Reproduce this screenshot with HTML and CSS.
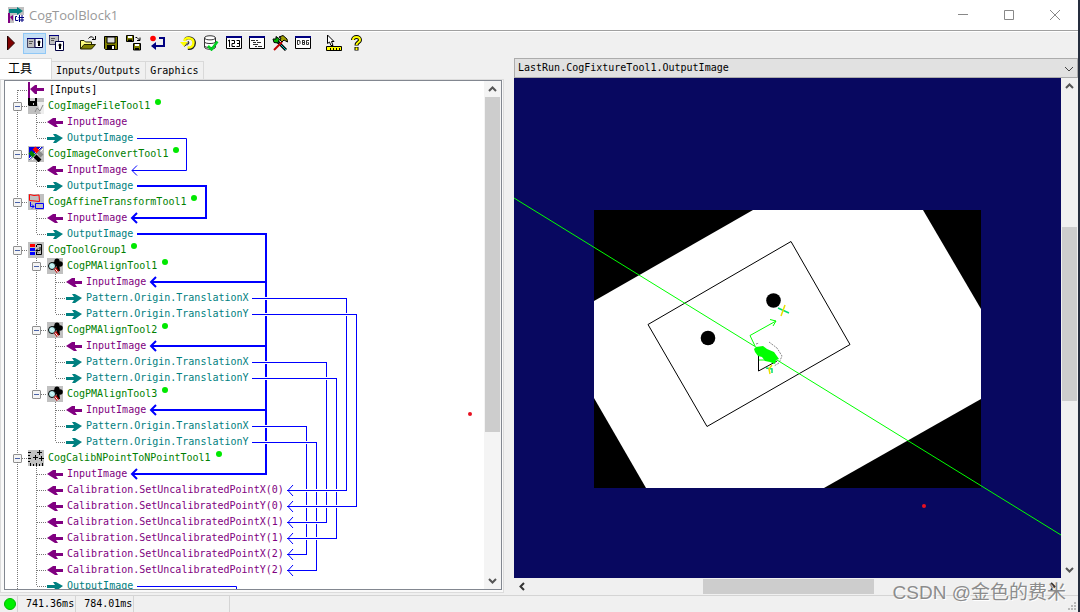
FILE: index.html
```html
<!DOCTYPE html>
<html lang="zh-CN">
<head>
<meta charset="utf-8">
<title>CogToolBlock1</title>
<link rel="stylesheet" href="styles.css">
</head>
<body>
<svg class="defs" aria-hidden="true">
  <symbol id="in" viewBox="0 0 16 16"><path fill="#800080" d="M0 8 6 4H9V7H16V10H9L11 13H8Z"/></symbol>
  <symbol id="out" viewBox="0 0 16 16"><path fill="#008080" d="M16 8 9 4H6L8 7H0V10H8L6 13H9Z"/></symbol>
  <symbol id="pm" viewBox="0 0 16 16"><path fill="#c0c0c0" d="M0 0H16V16H0Z"/><circle cx="10" cy="3" r="2.600"/><circle cx="13" cy="6" r="2.800"/><circle cx="8" cy="6" r="2.500"/><path d="M9 4h3l1 9h-3z"/><circle cx="5" cy="8" r="3.500" fill="#b8eef0" stroke="#000"/><path stroke="#fff" d="M4 6.500 6 8.500"/><path stroke="#b00000" stroke-width="3" d="m8 10 3 4"/><path stroke="#fff" d="m8 10.500 3 4"/></symbol>
  <symbol id="up" viewBox="0 0 15 15"><path fill="none" stroke="#555" stroke-width="2" d="m4 9 3.500-3.500L11 9"/></symbol>
  <symbol id="down" viewBox="0 0 15 15"><path fill="none" stroke="#555" stroke-width="2" d="m4 6 3.500 3.500L11 6"/></symbol>
  <symbol id="left" viewBox="0 0 15 15"><path fill="none" stroke="#333" stroke-width="2" d="M9 4 5.500 7.500 9 11"/></symbol>
  <symbol id="right" viewBox="0 0 15 15"><path fill="none" stroke="#333" stroke-width="2" d="m6 4 3.500 3.500L6 11"/></symbol>
</svg>
<div class="window">
<header class="titlebar">
  <svg class="i16" viewBox="0 0 16 16"><path fill="#c0c0c0" d="M0 0H16V16H0Z"/><path fill="#fff" d="M6 8H16V16H6Z"/><path fill="#800080" d="M0 6H2V16H0ZM2 10 5 8V14Z"/><path fill="#008080" d="M1 2H9V0L15 4 9 8V6H1Z"/><path fill="none" stroke="#000080" d="M9 9.500H7.500V13.500H10M11.500 8V15M14 8V15M10.500 10.500H16M10.500 13H16"/></svg>
  <h1 class="title">CogToolBlock1</h1>
  <div class="winbtns">
    <button aria-label="Minimize"><svg class="i12" viewBox="0 0 12 12"><path d="M1 5.500H11"/></svg></button>
    <button aria-label="Maximize"><svg class="i12" viewBox="0 0 12 12"><path d="M1.500 1.500H10.500V10.500H1.500Z"/></svg></button>
    <button aria-label="Close"><svg class="i12" viewBox="0 0 12 12"><path d="M1 1 11 11M11 1 1 11"/></svg></button>
  </div>
</header>
<nav class="toolbar" aria-label="Toolbar">
  <button class="tool" aria-label="Run"><svg class="i16" viewBox="0 0 16 16"><path fill="#800000" stroke="#200" d="M4.500 1 11.500 8 4.500 15Z"/></svg></button>
  <button class="tool on" aria-label="Docked display"><svg class="i16" viewBox="0 0 16 16"><path fill="#c0c0c0" stroke="#446" d="M.5 3.500H8V12.500H.5Z"/><path fill="#fff" stroke="#000040" d="M8 3.500H15.500V12.500H8Z"/><path stroke="#000080" d="M0 3.500H16"/><path stroke="#555" d="M2 6.500H6M2 8.500H5"/><circle cx="12" cy="7" r="1.500"/><path stroke="#000" stroke-width="2" d="M12 8V11"/></svg></button>
  <button class="tool" aria-label="Floating display"><svg class="i16" viewBox="0 0 16 16"><path fill="#c0c0c0" stroke="#446" d="M.5.5H9.500V9.500H.5Z"/><path stroke="#000080" d="M0 .5H10"/><path stroke="#555" d="M2 3.500H6M2 5.500H5"/><path fill="#fff" stroke="#000040" d="M6.500 6.500H14.500V15.500H6.500Z"/><circle cx="11" cy="10" r="1.500"/><path stroke="#000" stroke-width="2" d="M11 11V14"/></svg></button>
  <span class="sep"></span>
  <button class="tool" aria-label="Open"><svg class="i16" viewBox="0 0 16 16"><path fill="#ffff80" stroke="#220" d="M.5 14V5.500H4L5.500 7H11.500V9"/><path fill="#808000" stroke="#220" d="M.5 14 4 9.500H15.500L11.500 14Z"/><path fill="none" stroke="#000" d="M8.500 3.500Q11 0 14 3.500M15.500 1V4.500H12"/></svg></button>
  <button class="tool" aria-label="Save"><svg class="i16" viewBox="0 0 16 16"><path fill="#808000" stroke="#000" d="M1.500 1.500H14.500V14.500H2.500L1.500 13.500Z"/><path fill="#ddd" stroke="#000" d="M4 2H12V8H4Z"/><path d="M4 10H12V15H4Z"/><path fill="#fff" d="M9 11H11V14H9Z"/></svg></button>
  <button class="tool" aria-label="Save all"><svg class="i16" viewBox="0 0 16 16"><path fill="#808000" stroke="#000" d="M.5.5H7.500V6.500H.5ZM7.500 8.500H14.500V15H7.500Z"/><path fill="#fff" d="M2 1H6V3H2ZM9 9H13V11H9Z"/><path d="M2 4.500H6V6.500H2ZM9 13H13V15H9Z"/><path fill="none" stroke="#000" d="M9.500 2.500H11L13.500 5M14 2.500V5.500H11"/></svg></button>
  <button class="tool" aria-label="Reset"><svg class="i16" viewBox="0 0 16 16"><circle cx="4" cy="3.500" r="2.800" fill="red"/><path fill="none" stroke="#000080" stroke-width="2" d="M10 3H15V11H6"/><path fill="#000080" d="M2 11 7 7V15Z"/></svg></button>
  <span class="sep"></span>
  <button class="tool" aria-label="Refresh"><svg class="i16" viewBox="0 0 16 16"><path fill="none" stroke="#222" stroke-width="3" d="M5 4.500C8 1 14.500 3 14.500 8C14.500 12 11 14 8 13.500"/><path fill="none" stroke="#ff0" stroke-width="2.500" d="M4 6C6 1.500 13.500 2.500 13.500 7.500C13.500 11.500 10.500 13 7.500 12.500"/><path fill="#ff0" d="M0 7H8L4 11.500Z"/><path fill="none" stroke="#222" d="M8 7.500 4.500 11.500M7 10.500 9 8 8 6"/></svg></button>
  <button class="tool" aria-label="Database"><svg class="i16" viewBox="0 0 16 16"><path fill="#fff" stroke="#333" d="M1.500 3C1.500 0 12.500 0 12.500 3V12C12.500 15 1.500 15 1.500 12Z"/><path fill="none" stroke="#333" d="M1.500 3C2 5.500 12 5.500 12.500 3M1.500 7C2 9 12 9 12.500 7M1.500 11C2 13 12 13 12.500 11"/><path fill="none" stroke="#00d020" stroke-width="2.500" d="M5 11 8.500 14.500 14.500 6.500"/></svg></button>
  <button class="tool" aria-label="Numeric"><svg class="i16" viewBox="0 0 16 16"><path fill="#fff" stroke="#000" d="M.5 1.500H15.500V13.500H.5Z"/><path stroke="#000080" stroke-width="2" d="M0 2H16"/><path fill="none" stroke="#000" d="M2 6 3.500 5V12M5.500 5.500H8.500V8.500H6V11.500H9M10.500 5.500H13.500V11.500H10.500M11 8.500H13.500"/></svg></button>
  <button class="tool" aria-label="Script"><svg class="i16" viewBox="0 0 16 16"><path fill="#fff" stroke="#000" d="M.5 1.500H15.500V13.500H.5Z"/><path stroke="#000080" stroke-width="2" d="M0 2H16"/><path stroke="#333" d="M2 5.500H6M7 5.500H9M4 7.500H7M8 7.500H12M4 9.500H9M6 11.500H8M9 11.500H13"/></svg></button>
  <button class="tool" aria-label="Tools"><svg class="i16" viewBox="0 0 16 16"><path stroke="#000" stroke-width="3" d="M5 6 14 15"/><path stroke="#0cc" d="M5 6 14 15"/><path stroke="#c00000" stroke-width="2" d="M10 7 2 15"/><path fill="#00b000" stroke="#000" d="M4 1.500V4L1 4 2 7.500 6 8 7.500 4Z"/><path fill="#a0a000" stroke="#000" d="M7 2 11 .5 15 4 15.500 7 12 5 10 7 8 5 9 3Z"/></svg></button>
  <button class="tool" aria-label="Debug"><svg class="i16" viewBox="0 0 16 16"><path fill="#fff" stroke="#000" d="M.5 1.500H15.500V13.500H.5Z"/><path stroke="#000080" stroke-width="2" d="M0 2H16"/><path fill="none" stroke="#333" d="M2.500 5V9.500H4L5 8.500V6L4 5.500H2M7.500 5V9.500H9.500V5.500H7M7 7.500H9.500M14 5.500H11.500V9.500H13.500V7.500H12.500"/></svg></button>
  <span class="sep"></span>
  <button class="tool" aria-label="Pointer ruler"><svg class="i16" viewBox="0 0 16 16"><path fill="#fff" stroke="#000" d="M1.500 0V8.500L3.500 7 5 10.500H7L5.500 6.500H8Z"/><path fill="#ff0" stroke="#000" d="M.5 11.500H15.500V15.500H.5Z"/><path stroke="#000" d="M4.500 13V15M7.500 13V15M10.500 13V15M13.500 13V15"/></svg></button>
  <button class="tool" aria-label="Help"><svg class="i16" viewBox="0 0 16 16"><path fill="none" stroke="#000" stroke-width="4" d="M4 5C4 1 11 1 11 5 11 7.500 7.500 7 7.500 10.500M7.500 12V15.500"/><path fill="none" stroke="#ff0" stroke-width="2" d="M4 5C4 1 11 1 11 5 11 7.500 7.500 7 7.500 10M7.500 12.500V15"/></svg></button>
</nav>
<main class="main">
  <section class="left">
    <div class="tabs" role="tablist">
      <button class="tab active" role="tab" aria-selected="true">工具</button>
      <button class="tab" role="tab">Inputs/Outputs</button>
      <button class="tab" role="tab">Graphics</button>
    </div>
    <div class="page"><div class="treebox">
      <div class="tree">
        <div class="row leaf0 inputs"><svg class="i16" viewBox="0 0 16 16"><path fill="#800080" d="M0 0H2V16H0ZM2 7 7 3H9V6H16V9H9V12H7Z"/></svg>[Inputs]</div>
        <div class="row node0"><button class="box" aria-label="Collapse"></button><svg class="i16" viewBox="0 0 16 16"><path fill="#c0c0c0" d="M0 0H16V16H0Z"/><path fill="#eee" d="M9 4H16V16H13Z"/><path d="M0 0H9V8H1L0 7Z"/><path fill="#ccc" d="M2 0H7V3H2ZM5 5H6V7H5Z"/><path fill="none" stroke="#888" d="M7 14 9 10 12 13 15 7"/></svg><span class="name">CogImageFileTool1</span><i class="dot"></i></div>
        <div class="row leaf1 in"><svg class="i16"><use href="#in"/></svg>InputImage</div>
        <div class="row leaf1 out"><svg class="i16"><use href="#out"/></svg>OutputImage</div>
        <div class="row node0"><button class="box" aria-label="Collapse"></button><svg class="i16" viewBox="0 0 16 16"><path fill="#c0c0c0" d="M0 0H16V16H0Z"/><path fill="#0000e0" d="M1 1H15L1 14Z"/><path stroke="#fff" d="M13 1 1 13M15 3 4 14"/><path stroke="red" stroke-width="4" d="m6 2 4 4"/><path stroke="#008000" stroke-width="4" d="m2 6 4 4"/><path stroke="#000" stroke-width="4" d="m7 10 5 5"/><path stroke="#888" stroke-width="4" d="m10 6 4 4"/></svg><span class="name">CogImageConvertTool1</span><i class="dot"></i></div>
        <div class="row leaf1 in"><svg class="i16"><use href="#in"/></svg>InputImage</div>
        <div class="row leaf1 out"><svg class="i16"><use href="#out"/></svg>OutputImage</div>
        <div class="row node0"><button class="box" aria-label="Collapse"></button><svg class="i16" viewBox="0 0 16 16"><path fill="#c0c0c0" d="M0 0H16V16H0Z"/><path fill="none" stroke="red" d="M1.500.5 6 1.500 11 1 11.500 7.500 1.500 6.500Z"/><path fill="none" stroke="#00f" d="M7.500 9.500H15.500V14.500H7.500ZM2.500 8V12.500H6M4 10.500 6 12.500 4 14.500"/></svg><span class="name">CogAffineTransformTool1</span><i class="dot"></i></div>
        <div class="row leaf1 in"><svg class="i16"><use href="#in"/></svg>InputImage</div>
        <div class="row leaf1 out"><svg class="i16"><use href="#out"/></svg>OutputImage</div>
        <div class="row node0"><button class="box" aria-label="Collapse"></button><svg class="i16" viewBox="0 0 16 16"><path fill="#c0c0c0" d="M0 0H16V16H0Z"/><path fill="red" d="M2 2H7V5H2Z"/><path fill="#00f" d="M2 6H7V9H2ZM2 10H7V13H2Z"/><path fill="none" stroke="#000" d="M9 2.500H13.500V12.500H8M12 5V8.500H8M10 6.500 8 8.500 10 10.500M8.500 3V5M8.500 10V13"/></svg><span class="name">CogToolGroup1</span><i class="dot"></i></div>
        <div class="row node1"><button class="box" aria-label="Collapse"></button><svg class="i16"><use href="#pm"/></svg><span class="name">CogPMAlignTool1</span><i class="dot"></i></div>
        <div class="row leaf2 in"><svg class="i16"><use href="#in"/></svg>InputImage</div>
        <div class="row leaf2 out"><svg class="i16"><use href="#out"/></svg>Pattern.Origin.TranslationX</div>
        <div class="row leaf2 out"><svg class="i16"><use href="#out"/></svg>Pattern.Origin.TranslationY</div>
        <div class="row node1"><button class="box" aria-label="Collapse"></button><svg class="i16"><use href="#pm"/></svg><span class="name">CogPMAlignTool2</span><i class="dot"></i></div>
        <div class="row leaf2 in"><svg class="i16"><use href="#in"/></svg>InputImage</div>
        <div class="row leaf2 out"><svg class="i16"><use href="#out"/></svg>Pattern.Origin.TranslationX</div>
        <div class="row leaf2 out"><svg class="i16"><use href="#out"/></svg>Pattern.Origin.TranslationY</div>
        <div class="row node1"><button class="box" aria-label="Collapse"></button><svg class="i16"><use href="#pm"/></svg><span class="name">CogPMAlignTool3</span><i class="dot"></i></div>
        <div class="row leaf2 in"><svg class="i16"><use href="#in"/></svg>InputImage</div>
        <div class="row leaf2 out"><svg class="i16"><use href="#out"/></svg>Pattern.Origin.TranslationX</div>
        <div class="row leaf2 out"><svg class="i16"><use href="#out"/></svg>Pattern.Origin.TranslationY</div>
        <div class="row node0"><button class="box" aria-label="Collapse"></button><svg class="i16" viewBox="0 0 16 16"><path fill="#c0c0c0" d="M0 0H16V16H0Z"/><path stroke="#000" d="M0 2.500H3M0 5.500H2M0 8.500H3M0 11.500H2M2.500 13V16M5.500 14V16M8.500 13V16M11.500 14V16M14.500 13V16M9 2.500H14M11.500 0V5M5 7.500H10M7.500 5V10M11 8.500H16M13.500 6V11"/></svg><span class="name">CogCalibNPointToNPointTool1</span><i class="dot"></i></div>
        <div class="row leaf1 in"><svg class="i16"><use href="#in"/></svg>InputImage</div>
        <div class="row leaf1 in"><svg class="i16"><use href="#in"/></svg>Calibration.SetUncalibratedPointX(0)</div>
        <div class="row leaf1 in"><svg class="i16"><use href="#in"/></svg>Calibration.SetUncalibratedPointY(0)</div>
        <div class="row leaf1 in"><svg class="i16"><use href="#in"/></svg>Calibration.SetUncalibratedPointX(1)</div>
        <div class="row leaf1 in"><svg class="i16"><use href="#in"/></svg>Calibration.SetUncalibratedPointY(1)</div>
        <div class="row leaf1 in"><svg class="i16"><use href="#in"/></svg>Calibration.SetUncalibratedPointX(2)</div>
        <div class="row leaf1 in"><svg class="i16"><use href="#in"/></svg>Calibration.SetUncalibratedPointY(2)</div>
        <div class="row leaf1 out"><svg class="i16"><use href="#out"/></svg>OutputImage</div>
        <svg class="wires" viewBox="5 82 480 512" aria-hidden="true">
          <g class="guide"><path d="M17.500 90V102M17.500 110V150M17.500 158V198M17.500 206V246M17.500 254V454M17.500 462V594"/><path d="M36.500 114V138M36.500 162V186M36.500 210V234M36.500 258V262M36.500 270V326M36.500 334V390M36.500 466V586"/><path d="M55.500 274V314M55.500 338V378M55.500 402V442"/>
          <path d="M18 90.500H28M22 106.500H28M22 154.500H28M22 202.500H28M22 250.500H28M22 458.500H28M41 266.500H47M41 330.500H47M41 394.500H47"/>
          <path d="M37 122.500H47M37 138.500H47M37 170.500H47M37 186.500H47M37 218.500H47M37 234.500H47M37 474.500H47M37 490.500H47M37 506.500H47M37 522.500H47M37 538.500H47M37 554.500H47M37 570.500H47M37 586.500H47"/>
          <path d="M56 282.500H66M56 298.500H66M56 314.500H66M56 346.500H66M56 362.500H66M56 378.500H66M56 410.500H66M56 426.500H66M56 442.500H66"/></g>
          <g class="thick"><path d="M137 186H206V218H132M137 234H266V474H132M266 282H151M266 346H151M266 410H151"/><path d="m137 213-5 5 5 5M137 469l-5 5 5 5M156 277l-5 5 5 5M156 341l-5 5 5 5M156 405l-5 5 5 5"/></g>
          <g class="thin"><path d="M137 138.500H186.500V170.500H132M137 586.500H236.500V594M346.500 298V491M356.500 314V507M326.500 362V523M336.500 378V539M306.500 426V555M316.500 442V571"/></g>
          <path class="gap" d="M255 298.500H300M255 314.500H353M255 362.500H300M255 378.500H333M255 426.500H300M255 442.500H313M290 490.500H343M290 506.500H353M290 522.500H323M290 538.500H333M290 554.500H303M290 570.500H313"/>
          <g class="thin"><path d="M252 298.500H347M252 314.500H357M252 362.500H327M252 378.500H337M252 426.500H307M252 442.500H317M287 490.500H347M287 506.500H357M287 522.500H327M287 538.500H337M287 554.500H307M287 570.500H317"/><path d="m137 165.500-5 5 5 5M293 485l-5 5.500 5 5.500M293 501l-5 5.500 5 5.500M293 517l-5 5.500 5 5.500M293 533l-5 5.500 5 5.500M293 549l-5 5.500 5 5.500M293 565l-5 5.500 5 5.500"/></g>
          <circle cx="470" cy="414" r="2" fill="#e81020"/>
        </svg>
      </div>
      <div class="vbar"><button aria-label="Scroll up"><svg class="i15"><use href="#up"/></svg></button><div class="track tree-track"><div class="thumb"></div></div><button aria-label="Scroll down"><svg class="i15"><use href="#down"/></svg></button></div>
    </div></div>
  </section>
  <section class="right">
    <div class="combo"><select class="select" aria-label="Image record"><option>LastRun.CogFixtureTool1.OutputImage</option></select><svg class="chev" viewBox="0 0 10 6"><path d="m1 1 4 4 4-4"/></svg></div>
    <div class="view">
      <svg class="canvas" viewBox="514 78 547 500" role="img" aria-label="Output image">
        <path d="M594 210H981V488H594Z"/>
        <path fill="#fff" d="M753 210H923L981 309V399L824 488H646L594 398V301Z"/>
        <path fill="none" stroke="#000" d="M791 241.500 850 344.500 707 426.500 648 324.500ZM758.500 352V371L777 361"/>
        <circle cx="773.500" cy="300.500" r="7.300"/><circle cx="708" cy="338" r="7.300"/>
        <path fill="none" stroke="#888" stroke-dasharray="2 1" d="M756 344 759 343M769 342 777 348 782 356 779 363 774 366"/>
        <path stroke="#0f0" fill="none" d="M514 198 1061 535M755 346 750 335.500 776 321M770 319.500 776 321 773 326M759 360H766L770 356"/>
        <path fill="#0f0" d="m756 347 7-1 4 3 7 3 5 7-3 1-1 4-5-2-5-1-3-4-4-1-3-4-1-3z"/>
        <path stroke="#00e070" stroke-width="1.500" fill="none" d="m778 308 11 5M766 368l6 1v4"/><path stroke="#e8e000" stroke-width="1.500" fill="none" d="m781 316 4-11M770 374l-1-5 3-4"/>
        <circle cx="924" cy="506" r="2" fill="#e81020"/>
      </svg>
      <div class="vbar"><button aria-label="Scroll up"><svg class="i15"><use href="#up"/></svg></button><div class="track view-track"><div class="thumb"></div></div><button aria-label="Scroll down"><svg class="i15"><use href="#down"/></svg></button></div>
    </div>
    <div class="hbar"><button aria-label="Scroll left"><svg class="i15"><use href="#left"/></svg></button><div class="track h-track"><div class="thumb"></div></div><button aria-label="Scroll right"><svg class="i15"><use href="#right"/></svg></button></div>
  </section>
</main>
<footer class="status">
  <span class="cell lamp"><i class="light"></i></span><span class="cell">741.36ms</span><span class="cell">784.01ms</span><span class="cell spare"></span>
  <svg class="grip" viewBox="0 0 9 9"><path fill="#b8b8b8" d="M6 0h2v2H6zM3 3h2v2H3zM6 3h2v2H6zM0 6h2v2H0zM3 6h2v2H3zM6 6h2v2H6z"/></svg>
</footer>
<div class="watermark">CSDN @金色的费米</div>
</div>
</body>
</html>
```
FILE: styles.css
```css
* { box-sizing: border-box; }
body {
  margin: 0;
  font: 10px/16px "DejaVu Sans Mono", "Noto Sans CJK SC", monospace;
  color: #000;
  background: #252d3d;
}
button { margin: 0; padding: 0; border: 0; background: none; font: inherit; color: inherit; }
svg { display: block; flex: none; }
.defs { position: absolute; width: 0; height: 0; }
.i16 { width: 16px; height: 16px; }
.i15 { width: 15px; height: 15px; }
.i12 { width: 12px; height: 12px; fill: none; stroke: #888; }
.window {
  position: relative;
  display: flex;
  flex-direction: column;
  height: 100vh;
  margin-right: 2px;
  background: #f0f0f0;
}

.titlebar {
  display: flex;
  align-items: center;
  gap: 5px;
  height: 31px;
  padding-left: 8px;
  background: #fff;
  border-bottom: 1px solid #a0a0a0;
}
.title { margin: 0; font: 13px/20px "Open Sans", "Noto Sans", sans-serif; color: #999; }
.winbtns { display: flex; margin-left: auto; }
.winbtns button { display: grid; place-items: center; width: 46px; height: 30px; }

.toolbar { display: flex; height: 27px; padding-top: 1px; border-top: 1px solid #fff; }
.tool { width: 23px; height: 21px; padding: 1px 4px 3px 3px; }
.tool.on { padding: 1px 2px 2px 3px; background: #c5dff5; border: 1px solid #90c8f6; }
.sep { width: 8px; }

.main { flex: 1; min-height: 0; display: grid; grid-template-columns: 504fr 564fr; column-gap: 10px; }
.left, .right { display: flex; flex-direction: column; min-width: 0; min-height: 0; }
.tabs { display: flex; align-items: flex-end; height: 21px; }
.tab { height: 18px; padding: 0 5px 0 4px; border: 1px solid #d9d9d9; border-width: 1px 1px 0 0; white-space: nowrap; }
.tab.active { width: 52px; height: 21px; padding: 0 0 0 8px; text-align: left; font-size: 12px; background: #fff; }
.page { flex: 1; min-height: 0; margin-bottom: 2px; padding: 0 1px 2px 3px; border: 1px solid #dcdcdc; background: #f9f9f9; }
.treebox { display: flex; height: 100%; border: 1px solid #828790; background: #fff; overflow: hidden; }
.tree { position: relative; flex: 1; padding-top: 1px; overflow: hidden; }
.row { display: flex; align-items: center; gap: 4px; height: 16px; white-space: nowrap; color: #008000; }
.leaf0 { padding-left: 23px; gap: 5px; }
.leaf1 { padding-left: 42px; }
.leaf2 { padding-left: 61px; }
.node0 { padding-left: 8px; }
.node1 { padding-left: 27px; }
.inputs { color: #000; }
.in { color: #800080; }
.out { color: #008080; }
.box {
  width: 9px;
  height: 9px;
  margin-right: 2px;
  border: 1px solid #919191;
  border-radius: 1px;
  background: linear-gradient(#4b63a7, #4b63a7) center / 5px 1px no-repeat #f4f4f4;
}
.dot { width: 6px; height: 6px; margin: 0 0 8px 1px; border-radius: 50%; background: #00e800; }
.wires { position: absolute; top: 1px; left: 0; width: 480px; height: 512px; fill: none; }
.guide { stroke: #777; stroke-dasharray: 1 1; }
.thin { stroke: #0000ff; }
.thick { stroke: #0000ff; stroke-width: 2; }
.gap { stroke: #fff; stroke-width: 3; }

.vbar { display: flex; flex-direction: column; flex: none; width: 17px; padding: 1px; background: #f0f0f0; }
.vbar button, .hbar button { flex: none; }
.track { flex: 1; min-width: 0; min-height: 0; display: grid; }
.thumb { background: #cdcdcd; }
.treebox .vbar { background: #f4f4f4; }
.tree-track { grid-template-rows: 334fr 141fr; }
.view-track { grid-template-rows: 133fr 174fr 161fr; }
.view-track .thumb { grid-row: 2; }
.h-track { grid-template-columns: 172fr 171fr 170fr; }
.h-track .thumb { grid-column: 2; }

.combo { position: relative; height: 20px; }
.select {
  appearance: none;
  width: 100%;
  height: 20px;
  padding: 0 20px 0 3px;
  border: 1px solid #acacac;
  border-radius: 0;
  background: #e1e1e1;
  font: inherit;
  color: #000;
}
.chev { position: absolute; top: 8px; right: 4px; width: 10px; height: 6px; fill: none; stroke: #444; pointer-events: none; }
.view { flex: 1; min-height: 0; display: flex; }
.canvas { flex: 1; min-width: 0; height: 100%; background: #080860; }
.hbar { display: flex; height: 17px; padding: 1px 18px 1px 1px; }

.status { display: flex; flex: none; height: 17px; border-top: 1px solid #d4d4d4; }
.cell { padding: 0 1px 0 8px; border-right: 1px solid #d4d4d4; }
.lamp { width: 18px; padding: 2px 0 0 4px; }
.light { display: block; width: 12px; height: 12px; border-radius: 50%; background: #00f000; border: 1px solid #00b800; }
.spare { width: 96px; }
.grip { width: 9px; height: 9px; margin: 6px 1px 0 auto; }
.watermark {
  position: absolute;
  right: 12px;
  bottom: 6px;
  font: 19px/26px "Liberation Sans", "Noto Sans CJK SC", sans-serif;
  color: #8c8c8c;
  text-shadow: 1px 1px #fff;
  pointer-events: none;
}
```
